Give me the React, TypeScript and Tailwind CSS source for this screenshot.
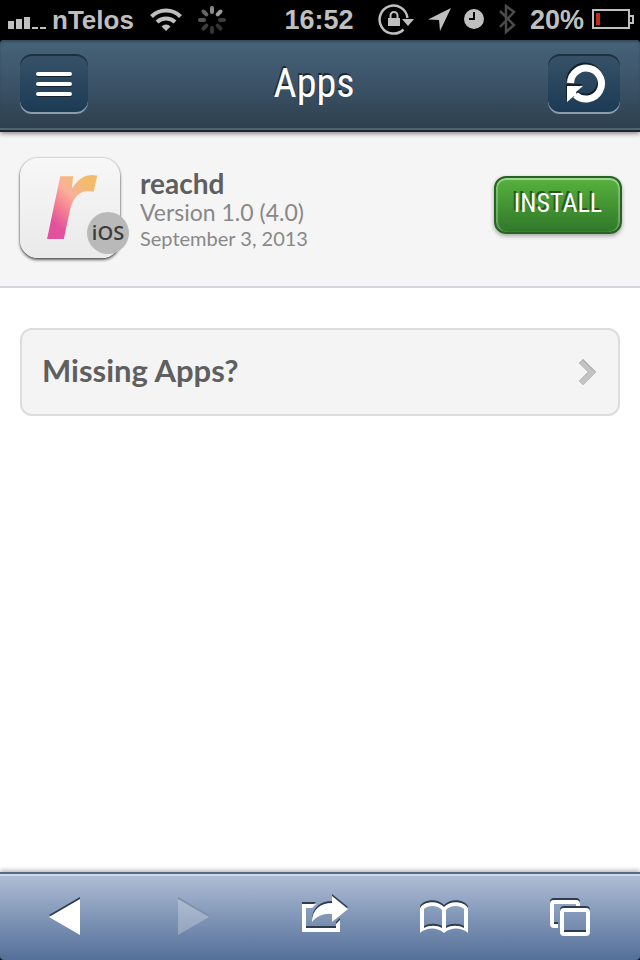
import type { ReactNode } from "react";

const condensed = "font-['Roboto_Condensed','Open_Sans_Condensed','Lato',sans-serif]";
const body = "font-['Lato','Open_Sans',sans-serif]";

function StatusBar() {
  const spokes = ["#8a8a8a", "#9c9c9c", "#3c3c3c", "#333333", "#333333", "#3c3c3c", "#555555", "#666666"];
  return (
    <div className="grid h-10 grid-cols-[1fr_auto_1fr] items-center bg-black pr-1.5 pl-2 font-['Liberation_Sans',Arial,sans-serif] font-bold leading-none text-[#bfbfbf]">
      <div className="flex items-center">
        <svg width="38" height="40" fill="#bfbfbf" aria-hidden="true">
          <path d="M0 21h6v8H0zM8 19h6v10H8zM16 17h6v12h-6zM24 27h6v2h-6zM32 27h6v2h-6z" />
        </svg>
        <span className="ml-1.5 text-[26px]">nTelos</span>
        <svg className="ml-4" width="32" height="40" fill="none" stroke="#bfbfbf" strokeWidth="4" aria-label="Wi-Fi">
          <path d="M1.500 16.500a20.500 20.500 0 0 1 29 0" />
          <path d="M7 22a13 13 0 0 1 18 0" />
          <path d="M16 31l-4.500-4.500a6 6 0 0 1 9 0z" fill="#bfbfbf" stroke="none" />
        </svg>
        <svg className="ml-4" width="28" height="40" strokeWidth="4" strokeLinecap="round" aria-label="Loading">
          {spokes.map((color, i) => (
            <line key={i} x1="14" y1="12" x2="14" y2="8" stroke={color} transform={`rotate(${i * 45} 14 20)`} />
          ))}
        </svg>
      </div>
      <span className="pr-1 text-[27px]">16:52</span>
      <div className="flex items-center justify-end">
        <svg width="36" height="40" fill="none" stroke="#bfbfbf" aria-label="Rotation locked">
          <path d="M25.500 29.500A14 14 0 1 1 29.500 18" strokeWidth="2.500" />
          <path d="M24 19h12l-6 7z" fill="#bfbfbf" stroke="none" />
          <path d="M10 18h12v8H10z" fill="#bfbfbf" stroke="none" />
          <path d="M12.500 18v-2.500a3.500 3.500 0 0 1 7 0V18" strokeWidth="2" />
        </svg>
        <svg className="ml-3.5" width="24" height="40" fill="#bfbfbf" aria-label="Location">
          <path d="M23 8L12 31 11 20 0 19.500z" />
        </svg>
        <svg className="ml-3" width="20" height="40" aria-label="Alarm">
          <circle cx="10" cy="19" r="10" fill="#bfbfbf" />
          <path d="M10 12v7H5" fill="none" stroke="#000" strokeWidth="2" />
        </svg>
        <svg className="ml-3" width="20" height="40" fill="none" stroke="#4a4a4a" strokeWidth="2.500" aria-label="Bluetooth">
          <path d="M4 11l14 14-8 7V6l8 6L4 27" />
        </svg>
        <span className="ml-3.5 text-[27px]">20%</span>
        <svg className="ml-2" width="42" height="40" fill="none" stroke="#bfbfbf" strokeWidth="2" aria-label="Battery">
          <path d="M1 10h36v18H1z" />
          <path d="M38 16h3v7h-3" />
          <path d="M4 13h4v12H4z" fill="#c5281c" stroke="none" />
        </svg>
      </div>
    </div>
  );
}

function HeaderButton({ label, wide, children }: { label: string; wide?: boolean; children: ReactNode }) {
  return (
    <button
      type="button"
      aria-label={label}
      className={`${wide ? "w-[72px]" : "w-[68px]"} flex h-[60px] items-center justify-center rounded-xl bg-linear-to-b from-[#375268] to-[#1b3a54] shadow-[inset_0_2px_0_#20303c,inset_0_-2px_0_#8c9cab]`}
    >
      {children}
    </button>
  );
}

function Header() {
  return (
    <div className="bg-black">
      <header className="relative flex h-[92px] items-center justify-between rounded-t bg-linear-to-b from-[#466379] via-[#3b5267] to-[#2b3e4c] px-5 pb-1 shadow-[inset_0_-2px_0_#1b2833,inset_0_-4px_0_#53646f,inset_0_2px_2px_#354b5c,0_2px_4px_#00000066]">
        <HeaderButton label="Menu">
          <svg className="drop-shadow-[0_1px_0_#14232f]" width="36" height="24" stroke="#fff" strokeWidth="4" strokeLinecap="round">
            <path d="M2 2h32M2 12h32M2 22h32" />
          </svg>
        </HeaderButton>
        <h1 className={`${condensed} pr-2 text-[40px] leading-none font-normal text-white [text-shadow:-1px_-2px_0_#1b2833]`}>Apps</h1>
        <HeaderButton label="Refresh" wide>
          <svg className="drop-shadow-[-1px_-2px_0_#14202b]" width="44" height="44" fill="none">
            <path d="M8.500 21A15.500 15.500 0 1 1 13.500 33" stroke="#fff" strokeWidth="7" />
            <path d="M5 24h16l-7 6 2 6-4-2-7 6z" fill="#fff" />
          </svg>
        </HeaderButton>
      </header>
    </div>
  );
}

function AppIcon() {
  return (
    <div className="relative size-[100px] shrink-0 rounded-[18px] bg-linear-to-b from-[#f7f7f7] to-[#eaeaea] shadow-[0_2px_3px_#00000099,0_0_2px_#00000066]">
      <svg className="overflow-visible" width="100" height="100" role="img" aria-label="reachd icon">
        <defs>
          <linearGradient id="brand" x1="0.65" y1="0.2" x2="0.4" y2="1">
            <stop offset="0.2" stopColor="#f3bb6b" />
            <stop offset="0.4" stopColor="#fbb09a" />
            <stop offset="0.55" stopColor="#f58092" />
            <stop offset="0.72" stopColor="#e2529c" />
          </linearGradient>
        </defs>
        <text x="25" y="81" fill="url(#brand)" className="font-['Open_Sans',sans-serif] text-[114px] font-bold italic">r</text>
      </svg>
      <span className="absolute -right-[9px] bottom-1 flex size-[42px] items-center justify-center rounded-full bg-[#b9b9b9] font-['Open_Sans',sans-serif] text-[20px] font-semibold leading-none text-[#3c3c3c]">
        iOS
      </span>
    </div>
  );
}

function AppRow() {
  return (
    <section className="flex h-[156px] items-start border-b-2 border-[#d3d7db] bg-[#f5f5f5] pt-[26px] pr-[18px] pl-5">
      <AppIcon />
      <div className={`${body} ml-5 flex-1 pt-[9px] text-[#888888]`}>
        <h2 className="text-[28px] leading-8 font-bold text-[#5f5f5f]">reachd</h2>
        <p className="text-[23px] leading-[26px]">Version 1.0 (4.0)</p>
        <p className="text-[20px] leading-[26px]">September 3, 2013</p>
      </div>
      <button
        type="button"
        className={`${condensed} mt-[18px] h-[58px] w-32 rounded-xl border-2 border-[#276420] bg-linear-to-b from-[#57b23e] to-[#30782a] pb-1 text-[26px] leading-none text-white shadow-[inset_0_2px_1px_#a4d79a,inset_2px_0_1px_#ffffff44,inset_-2px_0_1px_#ffffff44,0_2px_4px_#00000055] [text-shadow:-2px_-2px_0_#245a1e]`}
      >
        INSTALL
      </button>
    </section>
  );
}

function ToolButton({ label, disabled, children }: { label: string; disabled?: boolean; children: ReactNode }) {
  return (
    <button type="button" aria-label={label} disabled={disabled} className="flex h-full flex-1 items-center justify-center">
      <svg
        className={disabled ? "drop-shadow-[0_-2px_0_#7f8fa9]" : "drop-shadow-[0_-2px_0_#2f3c50]"}
        width="72"
        height="48"
        fill="none"
        stroke="#fff"
        strokeWidth="4"
      >
        {children}
      </svg>
    </button>
  );
}

function Toolbar() {
  return (
    <div className="bg-black">
      <nav className="flex h-[88px] items-center rounded-b border-t-2 border-[#546c8a] bg-linear-to-b from-[#b0bfd6] to-[#546f98] shadow-[inset_0_2px_0_#cfd8e4,0_-2px_4px_#00000044]">
        <ToolButton label="Back">
          <path d="M21 24L52 6v36z" fill="#fff" stroke="none" />
        </ToolButton>
        <ToolButton label="Forward" disabled>
          <defs>
            <linearGradient id="muted" x1="0" y1="0" x2="0" y2="1">
              <stop stopColor="#adbcd2" />
              <stop offset="1" stopColor="#93a4be" />
            </linearGradient>
          </defs>
          <path d="M53 24L22 6v36z" fill="url(#muted)" stroke="none" />
        </ToolButton>
        <ToolButton label="Share">
          <path d="M18 11h14l-4 4h-6v20h30v-4l4-4v12H18z" fill="#fff" stroke="none" />
          <path d="M48 3l16 13-16 13v-8c-8-1-15 2-20 8 0-12 8-19 20-19z" fill="#fff" stroke="none" />
        </ToolButton>
        <ToolButton label="Bookmarks">
          <path
            d="M8 15c4-7 18-8 24-1 6-7 20-6 24 1v25c-6-6-18-6-24 0-6-6-18-6-24 0zM12 16v19c5-3 13-3 18 0V17c-4-5-14-5-18-1zM34 17v18c5-3 13-3 18 0V16c-4-4-14-4-18 1z"
            fill="#fff"
            fillRule="evenodd"
            stroke="none"
          />
        </ToolButton>
        <ToolButton label="Pages">
          <path d="M18 33h-4a2 2 0 0 1-2-2V11a2 2 0 0 1 2-2h22a2 2 0 0 1 2 2v2" />
          <rect x="22" y="17" width="26" height="24" rx="2" />
        </ToolButton>
      </nav>
    </div>
  );
}

export default function App() {
  return (
    <div className="flex min-h-screen flex-col bg-white">
      <StatusBar />
      <Header />
      <main className="flex-1">
        <AppRow />
        <a
          href="#missing"
          className={`${body} mx-5 mt-10 flex h-[88px] items-center justify-between rounded-xl border-2 border-[#dcdcdc] bg-[#f4f4f4] px-5 text-[31px] font-bold text-[#5f5f5f]`}
        >
          <span className="pb-1">Missing Apps?</span>
          <svg width="20" height="28" aria-hidden="true">
            <path d="M3 3l11 11L3 25" fill="none" stroke="#a5a5a5" strokeWidth="6" />
            <path d="M3 4l11 10.500L3 25" fill="none" stroke="#c3c3c3" strokeWidth="5" />
          </svg>
        </a>
      </main>
      <Toolbar />
    </div>
  );
}
